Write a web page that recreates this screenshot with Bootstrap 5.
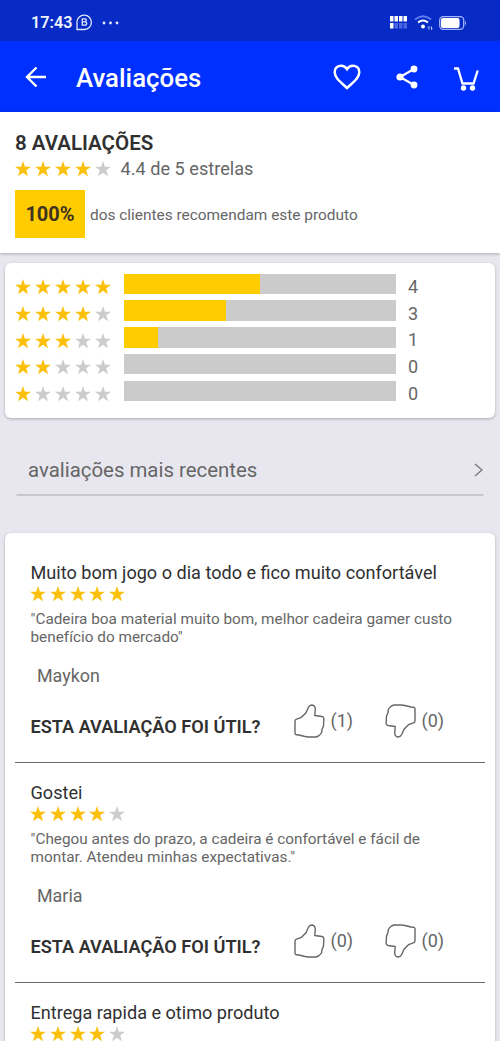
<!DOCTYPE html>
<html lang="pt-BR">
<head>
<meta charset="utf-8">
<meta name="viewport" content="width=device-width, initial-scale=1">
<title>Avaliações</title>
<link href="https://cdn.jsdelivr.net/npm/bootstrap@5.3.0/dist/css/bootstrap.min.css" rel="stylesheet">
<style>
body{font-family:Roboto,"Liberation Sans",sans-serif;background:#e8e7ef;color:#666;height:1041px;overflow:hidden}
svg{display:block;flex:none}
.status-bar{height:41px;background:#082bc6;color:#eef2ff;padding:4px 33px 0 31px}
.clock{font-size:16.2px;font-weight:600;line-height:20px;width:45px;white-space:nowrap}
.app-bar{height:71px;background:#0030ff;padding:0 21px 0 24px;color:#fff}
.app-title{font-size:25.8px;font-weight:500;line-height:30px;margin:3px 0 0 28px}
.dark-text{color:#303030}
.summary{height:141px;background:#fff;padding:19px 15px 0;box-shadow:0 1px 3px #0004}
.summary-title{font-size:20.5px;font-weight:600;line-height:24px}
.star-row{gap:3.9px;height:16px}
.star{width:16px;height:16px;fill:#fbc00b}
.star.off{fill:#ccc}
.average{font-size:18.15px;line-height:22px;margin-left:10px}
.percent{width:70px;height:48px;background:#fc0;color:#3f3320;font-size:20px;font-weight:700}
.recommend{font-size:15.42px;margin:3px 0 0 5px}
.panel{background:#fff;border-radius:6px;margin:0 5px;box-shadow:0 1px 3px #0004}
.histogram{margin-top:10px;height:154.5px;padding:10.5px 10px 0}
.bar-row{height:26.75px}
.bar-track{width:272px;height:20.5px;background:#cbcbcb;margin-left:13px}
.bar-fill{height:100%;background:#fc0}
.bar-count{font-size:18px;line-height:22px;margin:2.4px 0 0 12.5px}
.bar-row .star-row{margin-top:5.5px}
.sorter{margin:34.5px 16px 0;height:44px;border-bottom:2px solid #c8c7cf;border-radius:2px;padding:0 1px 5.5px 12px;font-size:20.4px}
.reviews{margin-top:37px;height:508px;padding-top:10px;border-radius:6px 6px 0 0;overflow:hidden}
.review{height:220.2px;margin:0 10px;padding:18.7px 0 0 15.5px;border-bottom:1.5px solid #6a6a6a}
.review-title{font-size:18.1px;line-height:22px}
.review-text{font-size:15.34px;line-height:18px;margin-top:8.3px;white-space:nowrap}
.author{font-size:17.9px;line-height:22px;margin:19px 0 0 6.5px}
.useful{font-size:18.15px;font-weight:600;line-height:22px;width:263px;flex:none;margin-top:12px}
.review .star-row{margin:2px 0 0 -.7px}
.votes{height:36px;margin-top:15.7px}
.vote-count{font-size:18px;width:54px;margin-left:6px}
.thumb{width:31px;height:34px;fill:none;stroke:#666;stroke-width:1.4;stroke-linejoin:round}
</style>
<script src="https://cdn.jsdelivr.net/npm/bootstrap@5.3.0/dist/js/bootstrap.bundle.min.js"></script>
</head>
<body>
<svg width="0" height="0" class="position-absolute" aria-hidden="true">
<symbol id="star" viewBox="0 0 15 15"><path d="M7.5 0 9.3 5.3H15L10.5 8.7 12.2 14.3 7.5 11 2.8 14.3 4.5 8.7 0 5.3H5.7Z"/></symbol>
<symbol id="thumb-up" viewBox="0 0 31 34"><path d="M1 17.500Q1 15.700 2.500 15.200L7.500 13.300 12 8.700 14.300 3.500Q15.500 1 18 1 21 1.300 21.300 5L20.800 11.500 28 12.500Q30.300 13 29.800 16L29.500 22 28 25.500 27.700 28.500Q26.500 30.500 24.500 32L22 33H14L10 32.300 5 31 2.300 30.800Q1 30.300 1 29Z"/></symbol>
</svg>

<div class="status-bar d-flex align-items-center">
  <span class="clock">17:43</span>
  <svg width="17" height="17" viewBox="0 0 17 17"><path d="M1 15.500V8A7.200 7.200 0 1 1 8.500 15.500Z" fill="none" stroke="#dfe7ff" stroke-width="1.300"/><path d="M6.300 4.800V11.200H8.500Q10.700 11.200 10.700 9.500T8.700 7.900H6.500 8.500Q10.300 7.900 10.300 6.300T8.300 4.800Z" fill="none" stroke="#dfe7ff" stroke-width="1.300"/></svg>
  <svg class="ms-2" width="20" height="6" viewBox="0 0 20 6" fill="#e4eaff"><circle cx="3" cy="3" r="1.400"/><circle cx="9.500" cy="3" r="1.400"/><circle cx="16" cy="3" r="1.400"/></svg>
  <svg class="ms-auto" width="17" height="13" viewBox="0 0 17 13"><path d="M0 0H3.500V5.500H0ZM4.500 0H8V5.500H4.500ZM9 0H12.500V5.500H9ZM13.500 0H17V5.500H13.500ZM0 7H3.500V12.500H0Z" fill="#fff"/><path d="M4.500 7H8V12.500H4.500ZM9 7H12.500V12.500H9ZM13.500 7H17V12.500H13.500Z" fill="#4a66e4"/></svg>
  <svg style="margin-left:7px" width="19" height="16" viewBox="0 0 19 16" fill="none"><path d="M1 4.500Q9 -2 17 4.500" stroke="#607cf0" stroke-width="2"/><path d="M4 7.500Q9 3.500 14 7.500" stroke="#fff" stroke-width="2"/><circle cx="9" cy="11.500" r="2" fill="#fff"/><path d="M15 14.500V11.500M14 12.500 15 11.500M17.500 11.500V14.500L18.500 13.500" stroke="#b9c7ff"/></svg>
  <svg style="margin-left:6px" width="28" height="14" viewBox="0 0 28 14"><rect x=".7" y=".7" width="24" height="12.600" rx="3.500" fill="none" stroke="#a4b5ff" stroke-width="1.300"/><rect x="2" y="2" width="18.500" height="10" rx="2" fill="#fff"/><path d="M26 4.500Q28 7 26 9.500Z" fill="#a4b5ff"/></svg>
</div>

<nav class="app-bar d-flex align-items-center">
  <svg width="24" height="24" viewBox="0 0 24 24" fill="none" stroke="#fff" stroke-width="2.400"><path d="M12.500 2.500 3 12 12.500 21.500M3 12H22"/></svg>
  <h1 class="app-title mb-0">Avaliações</h1>
  <svg class="ms-auto" width="28" height="26" viewBox="0 0 28 26" fill="none" stroke="#fff" stroke-width="2.500"><path d="M14 24C7 17.500 1.700 13.500 1.700 8.200 1.700 1 10.500-.5 14 5.200 17.500-.5 26.300 1 26.300 8.200 26.300 13.500 21 17.500 14 24Z"/></svg>
  <svg style="margin-left:35px" width="22" height="24" viewBox="0 0 22 24"><path d="M18 4 4 12 18 20" fill="none" stroke="#fff" stroke-width="2.200"/><g fill="#fff"><circle cx="18" cy="4" r="3.400"/><circle cx="4" cy="12" r="3.600"/><circle cx="18" cy="20" r="3.400"/></g></svg>
  <svg style="margin-left:35px;margin-top:4px" width="26" height="25" viewBox="0 0 26 25"><path d="M1 2.500H5L9.500 17.500H20.500L24.700 4.500" fill="none" stroke="#fff" stroke-width="2.300"/><circle cx="10.500" cy="22" r="2.700" fill="#fff"/><circle cx="19.500" cy="22" r="2.700" fill="#fff"/></svg>
</nav>

<section class="summary">
  <div class="summary-title dark-text">8 AVALIAÇÕES</div>
  <div class="d-flex align-items-center" style="margin-top:2.500px">
    <div class="star-row d-flex" data-stars="4"></div>
    <span class="average">4.4 de 5 estrelas</span>
  </div>
  <div class="d-flex align-items-center" style="margin-top:10.500px">
    <div class="percent d-flex align-items-center justify-content-center">100%</div>
    <span class="recommend">dos clientes recomendam este produto</span>
  </div>
</section>

<section class="panel histogram" id="histogram"></section>

<div class="sorter d-flex align-items-center justify-content-between">
  <span>avaliações mais recentes</span>
  <svg width="9" height="14" viewBox="0 0 9 14" fill="none" stroke="#77767c" stroke-width="1.300"><path d="M1 1 8 7 1 13"/></svg>
</div>

<section class="panel reviews" id="reviews"></section>

<script>
const fillStars = el => {
  for (let i = 0; i < 5; i++)
    el.insertAdjacentHTML('beforeend', `<svg class="star ${i < el.dataset.stars ? '' : 'off'}"><use href="#star"/></svg>`);
};
const counts = [4, 3, 1, 0, 0];
document.getElementById('histogram').innerHTML = counts.map((n, i) => `
  <div class="bar-row d-flex align-items-start">
    <div class="star-row d-flex" data-stars="${5 - i}"></div>
    <div class="bar-track"><div class="bar-fill" style="width:${n / 8 * 100}%"></div></div>
    <span class="bar-count">${n}</span>
  </div>`).join('');
const reviews = [
  {title: 'Muito bom jogo o dia todo e fico muito confortável', stars: 5, text: '"Cadeira boa material muito bom, melhor cadeira gamer custo<br>benefício do mercado"', author: 'Maykon', up: 1, down: 0},
  {title: 'Gostei', stars: 4, text: '"Chegou antes do prazo, a cadeira é confortável e fácil de<br>montar. Atendeu minhas expectativas."', author: 'Maria', up: 0, down: 0},
  {title: 'Entrega rapida e otimo produto', stars: 4}
];
document.getElementById('reviews').innerHTML = reviews.map(r => `
  <article class="review">
    <div class="review-title dark-text">${r.title}</div>
    <div class="star-row d-flex" data-stars="${r.stars}"></div>
    ${r.text ? `<div class="review-text">${r.text}</div>
    <div class="author">${r.author}</div>
    <div class="votes d-flex align-items-center">
      <span class="useful dark-text">ESTA AVALIAÇÃO FOI ÚTIL?</span>
      <svg class="thumb"><use href="#thumb-up"/></svg><span class="vote-count">(${r.up})</span>
      <svg class="thumb" viewBox="0 0 31 34"><g transform="rotate(180 15.5 17)"><use href="#thumb-up" width="31" height="34"/></g></svg><span class="vote-count">(${r.down})</span>
    </div>` : ''}
  </article>`).join('');
document.querySelectorAll('[data-stars]').forEach(fillStars);
</script>
</body>
</html>
